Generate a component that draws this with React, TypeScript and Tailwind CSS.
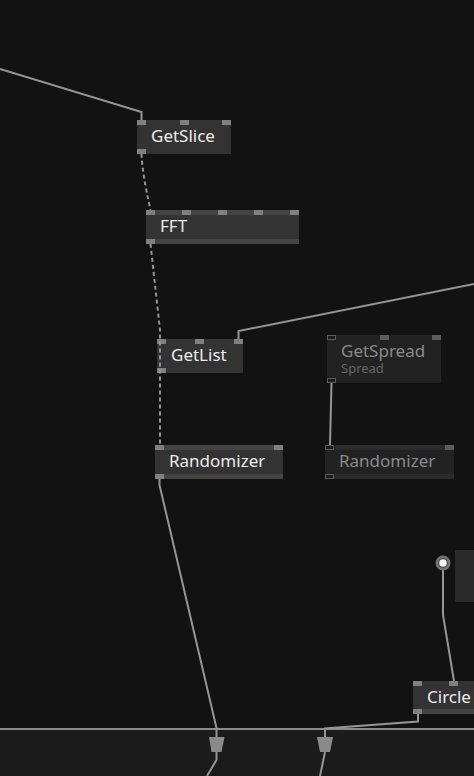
import React from "react";

type Pin = { cls: string; outline?: boolean };

function Node({
  pos,
  label,
  sub,
  top,
  bottom,
  topStrip,
  bottomStrip,
  dim,
}: {
  pos: string;
  label: string;
  sub?: string;
  top: Pin[];
  bottom: Pin[];
  topStrip?: boolean;
  bottomStrip?: boolean;
  dim?: boolean;
}) {
  const strip = dim ? "bg-[#2b2b2b]" : "bg-[#444444]";
  const pinCls = (p: Pin) =>
    p.outline
      ? "border border-[#5c5c5c] bg-[#1c1c1c]"
      : dim
      ? "bg-[#5c5c5c]"
      : "bg-[#808080]";
  return (
    <div className={`absolute ${pos} ${dim ? "bg-[#222222]" : "bg-[#333333]"}`}>
      {topStrip && <div className={`absolute left-0 right-0 top-0 h-[5px] ${strip}`} />}
      {bottomStrip && <div className={`absolute left-0 right-0 bottom-0 h-[5px] ${strip}`} />}
      {top.map((p, i) => (
        <div key={"t" + i} className={`absolute top-0 w-[9px] h-[5px] ${p.cls} ${pinCls(p)}`} />
      ))}
      {bottom.map((p, i) => (
        <div key={"b" + i} className={`absolute bottom-0 w-[9px] h-[5px] ${p.cls} ${pinCls(p)}`} />
      ))}
      <div
        className={`relative pl-[14px] pt-[7px] text-[17px] leading-[17px] whitespace-nowrap ${
          dim ? "text-[#8a8a8a]" : "text-[#ececec]"
        }`}
      >
        {label}
      </div>
      {sub && (
        <div className="relative pl-[14px] mt-[3px] text-[13px] leading-[13px] text-[#666666] whitespace-nowrap">
          {sub}
        </div>
      )}
    </div>
  );
}

export default function App() {
  const wire = "#959595";
  return (
    <div
      className="relative w-[474px] h-[776px] overflow-hidden flex flex-col bg-[#121212]"
      style={{ fontFamily: '"Noto Sans", "Open Sans", sans-serif' }}
    >
      <div className="relative flex-1">
        <Node
          pos="left-[137px] top-[120px] w-[94px] h-[34px]"
          label="GetSlice"
          top={[{ cls: "left-0" }, { cls: "left-[43px]" }, { cls: "right-0" }]}
          bottom={[{ cls: "left-0" }]}
        />
        <Node
          pos="left-[146px] top-[210px] w-[153px] h-[34px]"
          label="FFT"
          topStrip
          bottomStrip
          top={[
            { cls: "left-0" },
            { cls: "left-[36px]" },
            { cls: "left-[72px]" },
            { cls: "left-[108px]" },
            { cls: "right-0" },
          ]}
          bottom={[{ cls: "left-0" }]}
        />
        <Node
          pos="left-[157px] top-[339px] w-[86px] h-[34px]"
          label="GetList"
          top={[{ cls: "left-0" }, { cls: "left-[38px]" }, { cls: "right-0" }]}
          bottom={[{ cls: "left-0" }]}
        />
        <Node
          pos="left-[327px] top-[335px] w-[114px] h-[48px]"
          label="GetSpread"
          sub="Spread"
          dim
          top={[{ cls: "left-0", outline: true }, { cls: "left-[53px]" }, { cls: "right-0" }]}
          bottom={[{ cls: "left-0", outline: true }]}
        />
        <Node
          pos="left-[155px] top-[445px] w-[128px] h-[34px]"
          label="Randomizer"
          topStrip
          bottomStrip
          top={[{ cls: "left-0" }, { cls: "right-0" }]}
          bottom={[{ cls: "left-0" }]}
        />
        <Node
          pos="left-[325px] top-[445px] w-[129px] h-[34px]"
          label="Randomizer"
          dim
          topStrip
          bottomStrip
          top={[{ cls: "left-0", outline: true }, { cls: "right-0" }]}
          bottom={[{ cls: "left-0", outline: true }]}
        />
        <Node
          pos="left-[413px] top-[681px] w-[90px] h-[33px]"
          label="Circle"
          bottomStrip
          top={[{ cls: "left-0" }, { cls: "left-[36px]" }, { cls: "left-[72px]" }]}
          bottom={[{ cls: "left-0" }]}
        />
        <div className="absolute left-[455px] top-[550px] w-[30px] h-[52px] bg-[#2a2a2a]" />
      </div>
      <div className="h-[48px] bg-[#1b1b1b] border-t-2 border-[#8c8c8c]" />

      <svg
        className="absolute inset-0 pointer-events-none"
        width={474}
        height={776}
        viewBox="0 0 474 776"
      >
        <g fill="none" stroke={wire} strokeWidth={2}>
          <path d="M0 69 L141.5 112 L141.5 120" />
          <path d="M474 284 L238.5 331 L238.5 339" />
          <path d="M331.5 383 L330 445" />
          <path d="M159.5 479 L159.5 485 L216.5 728 L216.5 737" />
          <path d="M216.5 752 L216.5 760 L207 776" />
          <path d="M443 567 L443 615 L454 681" />
          <path d="M418 714 L418 721.5 L325 728.5 L325 737" />
          <path d="M325 752 L320 776" />
          <path d="M141.5 154 Q142 172 150.5 210" strokeDasharray="4 3" />
          <path d="M150.5 244 L160 330 L160 445" strokeDasharray="4 3" />
        </g>
        <polygon points="209,737 224.5,737 221.5,752 211.5,752" fill="#8a8a8a" />
        <polygon points="317,737 333,737 330,752 320,752" fill="#8a8a8a" />
        <circle cx={443} cy={563} r={7.5} fill="#747474" />
        <circle cx={443} cy={563} r={5} fill="#4a4a4a" />
        <circle cx={443} cy={563} r={3.8} fill="#f2f2f2" />
      </svg>
    </div>
  );
}
